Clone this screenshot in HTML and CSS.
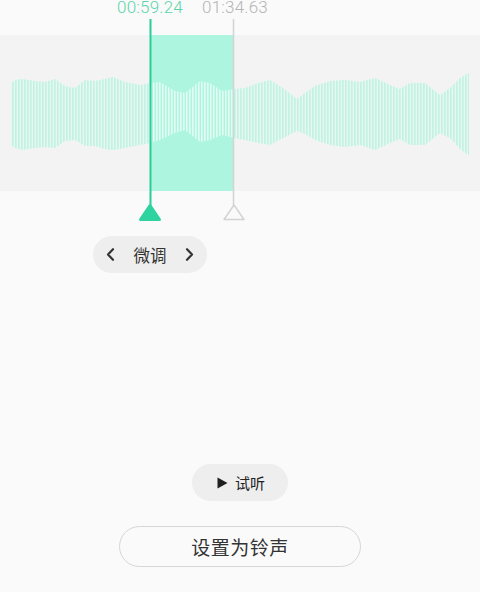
FILE: index.html
```html
<!DOCTYPE html>
<html lang="zh-CN">
<head>
<meta charset="utf-8">
<title>铃声剪辑</title>
<link rel="stylesheet" href="styles.css">
</head>
<body>
<main class="page">
  <section class="editor">
    <span class="time time-start" style="left:150px">00:59.24</span>
    <span class="time time-end" style="left:235px">01:34.63</span>
    <svg class="wave" width="480" height="224" viewBox="0 0 480 224" xmlns="http://www.w3.org/2000/svg">
      <defs>
        <pattern id="bars" width="3" height="224" patternUnits="userSpaceOnUse">
          <rect x="0" y="0" width="1.7" height="224" fill="#c3f2e3"/>
        </pattern>
        <pattern id="barsSel" width="3" height="224" patternUnits="userSpaceOnUse">
          <rect x="0" y="0" width="1.6" height="224" fill="#e2fcf4"/>
        </pattern>
        <clipPath id="sel"><rect x="151" y="35" width="82" height="156"/></clipPath>
        <path id="env" d="M11,83 L15,80 L22,79 L35,81 L45,82 L55,79 L65,86 L75,88 L85,80 L95,81 L105,79 L113,77 L125,82 L140,85 L150,83 L160,82 L175,91 L185,93 L200,81 L210,83 L222,91 L234,89 L245,88 L258,83 L270,80 L283,88 L297,99 L305,93 L315,86 L330,81 L345,80 L360,82 L375,78 L390,85 L400,89 L410,83 L425,83 L440,95 L450,88 L460,78 L468,73 L469,73 L469,155 L468,155 L460,149 L450,138 L440,133 L425,145 L410,145 L400,139 L390,143 L375,150 L360,145 L345,147 L330,145 L315,140 L305,134 L297,131 L283,138 L270,145 L258,143 L245,140 L234,138 L222,135 L210,140 L200,142 L185,130 L175,133 L160,140 L150,143 L140,145 L125,148 L113,150 L105,149 L95,146 L85,146 L75,140 L65,141 L55,148 L45,147 L35,148 L22,150 L15,148 L11,145 Z"/>
      </defs>
      <rect x="0" y="35" width="480" height="156" fill="#f3f3f3"/>
      <use href="#env" fill="#e6f8f1"/>
      <use href="#env" fill="url(#bars)"/>
      <g clip-path="url(#sel)">
        <rect x="151" y="35" width="82" height="156" fill="#adf5df"/>
        <use href="#env" fill="url(#barsSel)"/>
      </g>
      <line x1="233.5" y1="19" x2="233.5" y2="206" stroke="#d3d3d3" stroke-width="1.5"/>
      <path d="M234,205 L244,219.5 L224,219.5 Z" fill="#fafafa" stroke="#d3d3d3" stroke-width="1.5" stroke-linejoin="round"/>
      <line x1="150.5" y1="19" x2="150.5" y2="208" stroke="#26cf98" stroke-width="2"/>
      <path d="M150,205.5 L159.5,219.5 L140.5,219.5 Z" fill="#2ed39f" stroke="#2ed39f" stroke-width="3" stroke-linejoin="round"/>
    </svg>
  </section>

  <div class="fine">
    <svg class="chev" width="9" height="13" viewBox="0 0 9 13"><path d="M7,1.2 L2,6.5 L7,11.8" fill="none" stroke="#333" stroke-width="2.2" stroke-linecap="round" stroke-linejoin="round"/></svg>
    <span class="fine-label">微调</span>
    <svg class="chev" width="9" height="13" viewBox="0 0 9 13"><path d="M2,1.2 L7,6.5 L2,11.8" fill="none" stroke="#333" stroke-width="2.2" stroke-linecap="round" stroke-linejoin="round"/></svg>
  </div>

  <footer class="actions">
    <button class="preview" type="button">
      <svg width="11" height="12" viewBox="0 0 11 12"><path d="M0.5,0.5 L10.5,6 L0.5,11.5 Z" fill="#1f1f1f"/></svg>
      <span>试听</span>
    </button>
    <button class="set" type="button">设置为铃声</button>
  </footer>
</main>
</body>
</html>
```

FILE: styles.css
```css
html, body {
  margin: 0;
  padding: 0;
  background: #fafafa;
}

.page {
  width: 480px;
  height: 592px;
  display: flex;
  flex-direction: column;
  font-family: "Noto Sans CJK SC", "Noto Sans", sans-serif;
  overflow: hidden;
}

.editor {
  position: relative;
  height: 222px;
}

.wave {
  display: block;
}

.time {
  position: absolute;
  top: 0;
  transform: translateX(-50%);
  font-family: Roboto, "Liberation Sans", sans-serif;
  font-weight: 300;
  font-size: 17px;
  line-height: 14px;
  letter-spacing: 0.2px;
  white-space: nowrap;
}

.time-start {
  color: #5ad5ab;
}

.time-end {
  color: #b5b5b5;
}

.fine {
  margin: 14px 0 0 93px;
  width: 114px;
  height: 37px;
  box-sizing: border-box;
  padding: 0 13px 0 13px;
  border-radius: 19px;
  background: #eeeeee;
  display: flex;
  align-items: center;
  justify-content: space-between;
}

.chev {
  display: block;
}

.fine-label {
  font-size: 16.5px;
  color: #333333;
  line-height: 20px;
}

.actions {
  margin-top: auto;
  padding-bottom: 25px;
  display: flex;
  flex-direction: column;
  align-items: center;
}

.preview {
  width: 96px;
  height: 37px;
  border: none;
  border-radius: 19px;
  background: #eeeeee;
  display: flex;
  align-items: center;
  justify-content: center;
  gap: 7px;
  padding: 0 0 0 2px;
  font-family: "Noto Sans CJK SC", "Noto Sans", sans-serif;
  font-size: 15px;
  color: #222222;
  margin-bottom: 25px;
}

.preview svg {
  display: block;
}

.set {
  width: 242px;
  height: 41px;
  box-sizing: border-box;
  border: 1.5px solid #d6d6d6;
  border-radius: 21px;
  background: #fafafa;
  font-family: "Noto Sans CJK SC", "Noto Sans", sans-serif;
  font-size: 19px;
  color: #333333;
  padding: 0;
  letter-spacing: 0.5px;
}
```
